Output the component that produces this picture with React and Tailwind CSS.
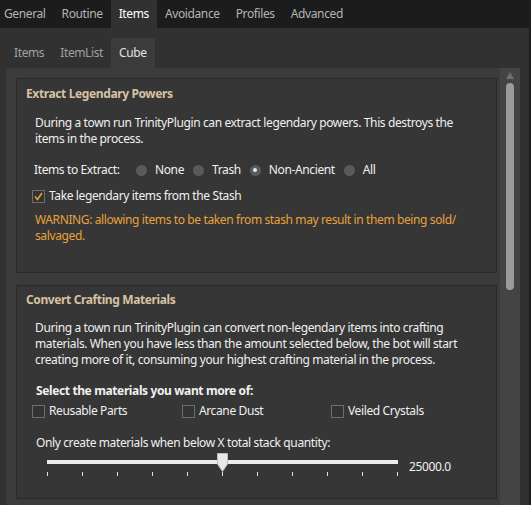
import React from 'react';

const topTabs = ['General', 'Routine', 'Items', 'Avoidance', 'Profiles', 'Advanced'];
const subTabs = ['Items', 'ItemList', 'Cube'];

const Radio = ({ label, checked }) => (
  <div className="flex items-center mr-[9px]">
    <span className="w-[11px] h-[11px] rounded-full bg-[#5a5a5a] flex items-center justify-center">
      {checked && <span className="w-[4px] h-[4px] rounded-full bg-[#e6e6e6]" />}
    </span>
    <span className="ml-[8px]">{label}</span>
  </div>
);

const Check = ({ label, checked, className = '' }) => (
  <div className={`flex items-center h-[16px] ${className}`}>
    <span className="w-[13px] h-[13px] border border-[#6e6e6e] bg-[#333333] flex items-center justify-center">
      {checked && (
        <svg width="11" height="11" viewBox="0 0 11 11">
          <path d="M2 5.5 L4.5 8.5 L9 2" fill="none" stroke="#e2a53a" strokeWidth="1.6" />
        </svg>
      )}
    </span>
    <span className="ml-[4px]">{label}</span>
  </div>
);

const GroupBox = ({ title, className = '', children }) => (
  <div className={`border border-[#2a2a2a] bg-[#363636] px-[9px] ${className}`}>
    <div className="h-[16px] leading-[16px] font-bold text-[#d7c2a3]">{title}</div>
    {children}
  </div>
);

const Slider = () => (
  <div className="flex items-start mt-[2px] ml-[21px]">
    <div className="relative w-[351px] h-[26px]">
      <div className="absolute left-0 right-0 top-[7px] h-[4px] bg-[#ececec]" />
      <svg className="absolute left-[170px] top-0" width="11" height="19" viewBox="0 0 11 19">
        <path d="M0.5 0.5 H10.5 V11 L5.5 18.5 L0.5 11 Z" fill="#e8e8e8" stroke="#bdbdbd" />
      </svg>
      <div className="absolute left-0 right-0 top-[19px] flex justify-between">
        {Array.from({ length: 11 }).map((_, i) => (
          <span key={i} className="w-[1px] h-[4px] bg-[#e0e0e0]" />
        ))}
      </div>
    </div>
    <div className="ml-[11px] mt-[6px] leading-[16px]">25000.0</div>
  </div>
);

export default function App() {
  return (
    <div className="w-[531px] h-[505px] overflow-hidden flex flex-col bg-[#313131] text-[12px] leading-[16px] tracking-[-0.38px] text-[#f0f0f0] font-['Noto_Sans',sans-serif]">
      {/* top tabs */}
      <div className="h-[28px] bg-[#1c1c1c] flex shrink-0 ml-[-4px]">
        {topTabs.map((t) => (
          <div
            key={t}
            className={`px-[8px] flex items-center ${t === 'Items' ? 'bg-[#313131] text-white' : 'text-[#b4b4b4]'}`}
          >
            {t}
          </div>
        ))}
      </div>

      <div className="flex-1 flex flex-col border-r-2 border-[#1c1c1c] min-h-0">
        {/* sub tabs */}
        <div className="h-[40px] flex items-end pl-[6px] shrink-0">
          {subTabs.map((t) => (
            <div
              key={t}
              className={`h-[30px] px-[8px] flex items-center ${t === 'Cube' ? 'bg-[#3b3b3b] text-[#e2e2e2]' : 'text-[#a0a0a0]'}`}
            >
              {t}
            </div>
          ))}
        </div>

        {/* content panel */}
        <div className="flex-1 flex ml-[6px] mr-[9px] bg-[#3b3b3b] min-h-0">
          <div className="w-[494px] pl-[10px] pr-[3px] pt-[10px] flex flex-col gap-[12px]">
            <GroupBox title="Extract Legendary Powers" className="h-[195px] pt-[7px]">
              <div className="mt-[13px] ml-[9px] whitespace-nowrap">
                <div>During a town run TrinityPlugin can extract legendary powers. This destroys the</div>
                <div>items in the process.</div>
              </div>
              <div className="mt-[15px] ml-[8px] flex items-center h-[16px] whitespace-nowrap">
                <span className="w-[102px]">Items to Extract:</span>
                <Radio label="None" />
                <Radio label="Trash" />
                <Radio label="Non-Ancient" checked />
                <Radio label="All" />
              </div>
              <Check className="mt-[10px] ml-[6px]" label="Take legendary items from the Stash" checked />
              <div className="mt-[8px] ml-[9px] text-[#e8a23a] whitespace-nowrap">
                <div>WARNING: allowing items to be taken from stash may result in them being sold/</div>
                <div>salvaged.</div>
              </div>
            </GroupBox>

            <GroupBox title="Convert Crafting Materials" className="h-[214px] shrink-0 pt-[6px]">
              <div className="mt-[12px] ml-[9px] whitespace-nowrap">
                <div>During a town run TrinityPlugin can convert non-legendary items into crafting</div>
                <div>materials. When you have less than the amount selected below, the bot will start</div>
                <div>creating more of it, consuming your highest crafting material in the process.</div>
              </div>
              <div className="mt-[15px] ml-[10px] font-bold">Select the materials you want more of:</div>
              <div className="mt-[4px] ml-[6px] flex whitespace-nowrap">
                <Check className="w-[150px]" label="Reusable Parts" />
                <Check className="w-[149px]" label="Arcane Dust" />
                <Check label="Veiled Crystals" />
              </div>
              <div className="mt-[16px] ml-[10px]">Only create materials when below X total stack quantity:</div>
              <Slider />
            </GroupBox>
          </div>

          {/* scrollbar */}
          <div className="w-[20px] bg-[#444444] flex flex-col items-center pt-[4px]">
            <svg width="8" height="7" viewBox="0 0 8 7">
              <path d="M4 0 L8 7 H0 Z" fill="#6f6f6f" />
            </svg>
            <div className="mt-[4px] w-[8px] h-[207px] rounded-full bg-[#9b9b9b]" />
          </div>
        </div>
      </div>
    </div>
  );
}
